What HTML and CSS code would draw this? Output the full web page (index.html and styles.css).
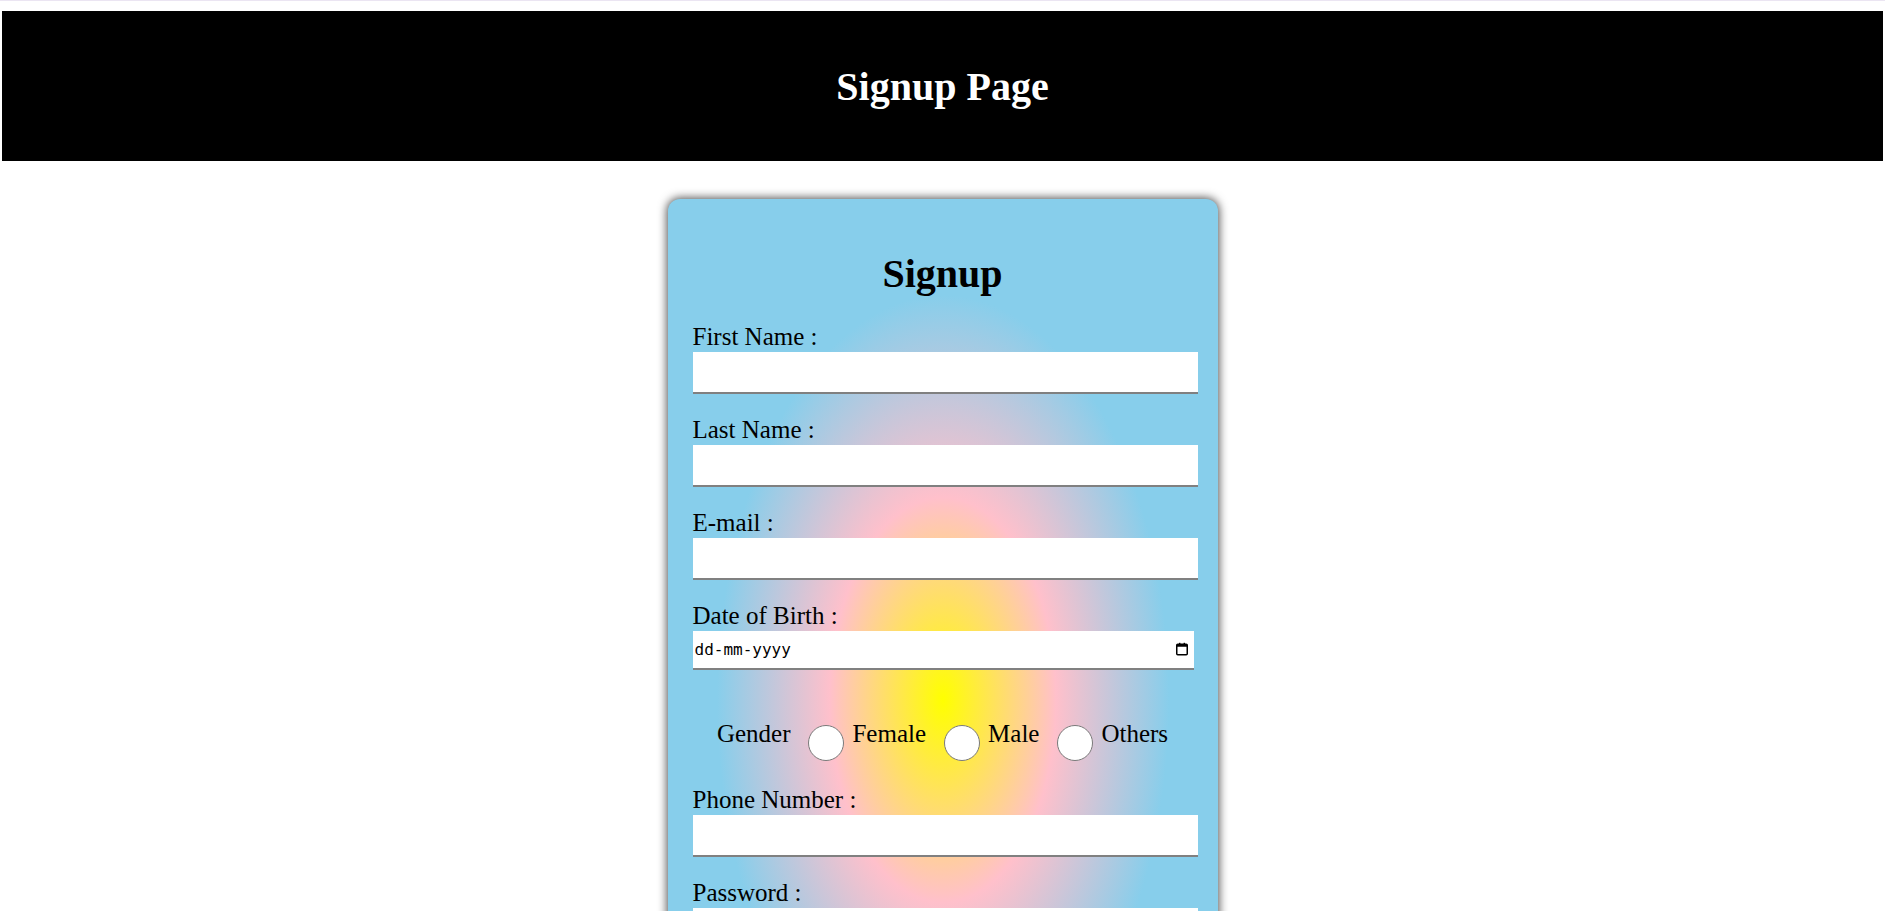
FILE: index.html
```html
<!DOCTYPE html>
<html lang="en">
<head>
<meta charset="utf-8">
<title>Signup Page</title>
<link rel="stylesheet" href="styles.css">
</head>
<body>
<header class="top-bar">
  <h1 class="page-title">Signup Page</h1>
</header>
<main class="page">
  <form class="card">
    <h2 class="card-title">Signup</h2>
    <div class="field">
      <label class="field-label">First Name :</label>
      <input class="field-input" type="text">
    </div>
    <div class="field">
      <label class="field-label">Last Name :</label>
      <input class="field-input" type="text">
    </div>
    <div class="field">
      <label class="field-label">E-mail :</label>
      <input class="field-input" type="email">
    </div>
    <div class="field">
      <label class="field-label">Date of Birth :</label>
      <div class="date-box">
        <input class="date-input" type="text" placeholder="dd-mm-yyyy">
        <svg class="date-icon" width="14" height="14" viewBox="0 0 14 14" aria-hidden="true">
          <rect x="1.75" y="2.25" width="10.5" height="10.5" rx="1" fill="none" stroke="#000" stroke-width="1.5"/>
          <rect x="1.75" y="2.25" width="10.5" height="2.5" fill="#000"/>
          <rect x="4" y="0.8" width="1.4" height="2.5" fill="#000"/>
          <rect x="8.6" y="0.8" width="1.4" height="2.5" fill="#000"/>
        </svg>
      </div>
    </div>
    <div class="gender-row">
      <span class="gender-text">Gender</span>
      <input class="radio" type="radio" name="gender">
      <span class="gender-text">Female</span>
      <input class="radio" type="radio" name="gender">
      <span class="gender-text">Male</span>
      <input class="radio" type="radio" name="gender">
      <span class="gender-text">Others</span>
    </div>
    <div class="field">
      <label class="field-label">Phone Number :</label>
      <input class="field-input" type="tel">
    </div>
    <div class="field">
      <label class="field-label">Password :</label>
      <input class="field-input" type="password">
    </div>
    <div class="field">
      <label class="field-label">Confirm Password :</label>
      <input class="field-input" type="password">
    </div>
    <button class="submit" type="button">Submit</button>
  </form>
</main>
</body>
</html>
```

FILE: styles.css
```css
html {
  border-top: 1px solid #ebe5f2;
}

body {
  margin: 0;
  font-family: "Liberation Serif", "Times New Roman", serif;
  color: #000;
  background: #fff;
}

.top-bar {
  margin: 10px 2px 0;
  height: 150px;
  box-sizing: border-box;
  padding-top: 2px;
  background: #000;
  display: flex;
  align-items: center;
  justify-content: center;
}

.page-title {
  margin: 0;
  color: #fff;
  font-size: 40px;
  line-height: 44px;
  font-weight: bold;
}

.page {
  display: flex;
  justify-content: center;
  padding-bottom: 40px;
}

.card {
  margin-top: 38px;
  width: 500px;
  padding: 25px;
  border-radius: 12px;
  box-shadow: 0 0 10px 1px rgba(0, 0, 0, 0.7);
  background-color: skyblue;
  background-image: radial-gradient(226px 405px at 50% 501px, yellow 0%, pink 50%, skyblue 100%);
  background-repeat: no-repeat;
  display: flex;
  flex-direction: column;
}

.card-title {
  margin: 27.5px 0 27.4px;
  font-size: 40px;
  line-height: 44px;
  font-weight: bold;
  text-align: center;
}

.field {
  display: flex;
  flex-direction: column;
  align-items: flex-start;
  margin-bottom: 22px;
}

.field-label {
  display: block;
  font-size: 25px;
  line-height: 28px;
}

.field-input {
  margin: 1px 0 0;
  width: 505px;
  height: 42px;
  box-sizing: border-box;
  padding: 0 0 0 5px;
  border: none;
  border-bottom: 2px solid #808080;
  background: #fff;
  font-size: 18px;
  outline: none;
}

.date-box {
  margin-top: 1px;
  width: 501px;
  height: 39px;
  box-sizing: border-box;
  border-bottom: 2px solid #808080;
  background: #fff;
  display: flex;
  align-items: center;
}

.date-input {
  flex: 1;
  min-width: 0;
  height: 100%;
  margin: 0;
  padding: 0 0 0 2px;
  border: none;
  background: transparent;
  font-family: "DejaVu Sans Mono", monospace;
  font-size: 16px;
  color: #000;
  outline: none;
}

.date-input::placeholder {
  color: #000;
  opacity: 1;
}

.date-icon {
  flex: none;
  margin-right: 5px;
}

.gender-row {
  display: flex;
  justify-content: center;
  align-items: flex-start;
  margin: 28px 0 25px;
}

.gender-text {
  font-size: 25px;
  line-height: 28px;
}

.radio {
  appearance: none;
  -webkit-appearance: none;
  width: 36px;
  height: 36px;
  margin: 5px 8.5px 0 17.5px;
  border: 1px solid #7a7a7a;
  border-radius: 50%;
  background: #fff;
  box-sizing: border-box;
}

.submit {
  align-self: center;
  margin-top: 10px;
  padding: 8px 30px;
  font-family: "Liberation Serif", "Times New Roman", serif;
  font-size: 22px;
  border: none;
  border-radius: 6px;
  background: #000;
  color: #fff;
}
```
